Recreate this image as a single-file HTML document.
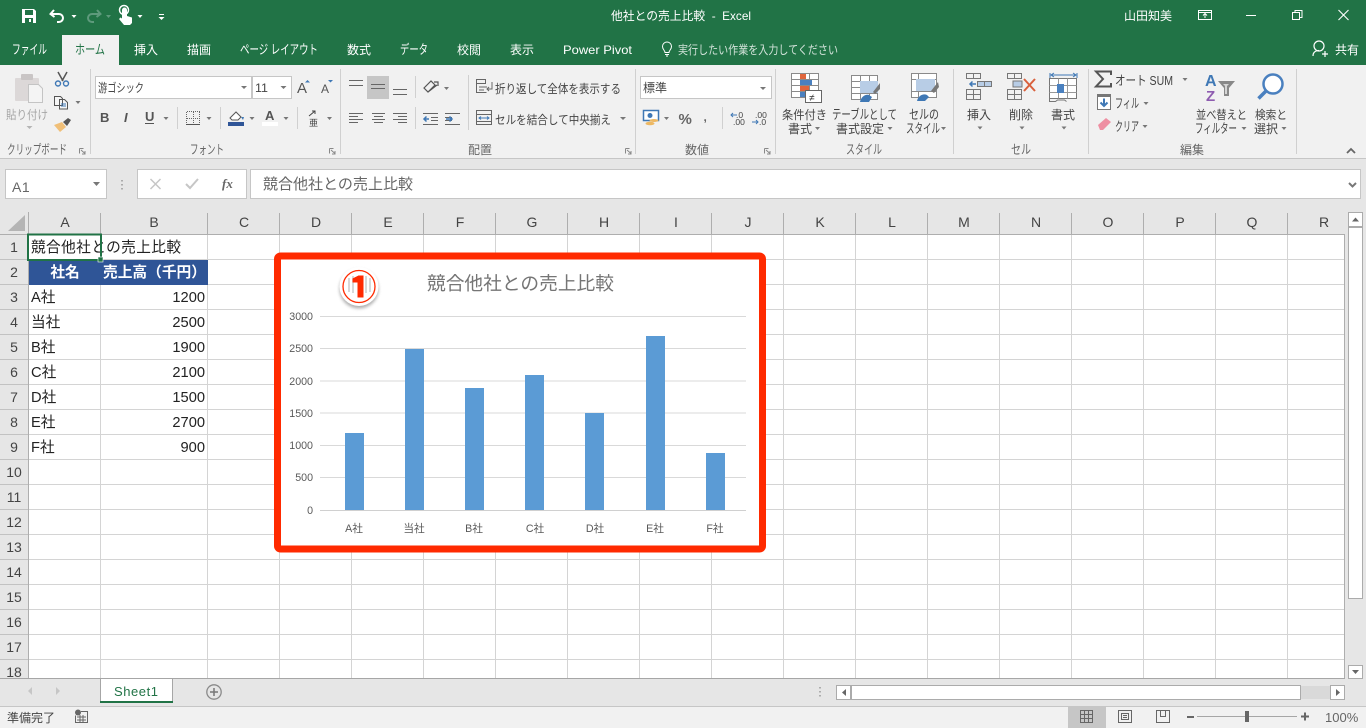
<!DOCTYPE html>
<html lang="ja"><head><meta charset="utf-8"><title>他社との売上比較 - Excel</title>
<style>
html,body{margin:0;padding:0;background:#e6e6e6;overflow:hidden}
svg{display:block}
text{font-family:"Liberation Sans","Noto Sans CJK JP",sans-serif;font-size:12px;fill:#444}
.w{fill:#fff}.g{fill:#8a8a8a}.c{font-size:14.67px;fill:#222}.h{font-size:14px;fill:#444;text-anchor:middle}
.gr{fill:#666}.ax{font-size:10.67px;fill:#595959}.ar{fill:#777}
text.k{font-size:13px}
</style></head><body>
<svg width="1366" height="728" viewBox="0 0 1366 728" xmlns="http://www.w3.org/2000/svg">
<defs><filter id="bl" x="-30%" y="-30%" width="160%" height="160%"><feGaussianBlur stdDeviation="1.5"/></filter></defs>
<rect width="1366" height="728" fill="#e6e6e6"/>
<!-- title bar -->
<rect width="1366" height="65" fill="#217346"/>
<rect x="62" y="35" width="57" height="30" fill="#f1f1f1"/>
<rect y="65" width="1366" height="93" fill="#f1f1f1"/>
<rect y="158" width="1366" height="1" fill="#c6c6c6"/>
<!-- QAT -->
<path d="M22 9h12l2 2v12H22z" fill="#fff"/><rect x="25" y="10" width="8" height="5" fill="#217346"/><rect x="25" y="18" width="8" height="5" fill="#217346"/><rect x="29" y="19" width="2" height="3" fill="#fff"/>
<path d="M54 10l-3.500 4 4 3M51.500 14H59a4 4 0 0 1 0 8h-2" fill="none" stroke="#fff" stroke-width="2"/>
<path d="M71.500 15h5l-2.500 3z" class="w"/>
<path d="M97 10l3.500 4-4 3M99.500 14H92a4 4 0 0 0 0 8h2" fill="none" stroke="#5e9a7c" stroke-width="2"/>
<path d="M106 15h5l-2.500 3z" fill="#5e9a7c"/>
<path d="M122 10a2.500 2.500 0 0 1 5 0v6l5 1.500V23l-2 2h-6l-5-6 1.500-1.500 1.500 1z" class="w"/><circle cx="124" cy="10" r="4.500" fill="none" stroke="#fff" stroke-width="1.500"/>
<path d="M137.500 15h5l-2.500 3z" class="w"/>
<rect x="159" y="14" width="5" height="1" fill="#fff"/><path d="M158.500 17h6l-3 3z" fill="#fff"/>
<text class="w" x="611" y="20" textLength="140" lengthAdjust="spacingAndGlyphs">他社との売上比較&#160; -&#160; Excel</text>
<text class="w" x="1124" y="20" textLength="48" lengthAdjust="spacingAndGlyphs">山田知美</text>
<path d="M1198.500 10.500h13v9h-13zM1198.500 12.500h13M1205 18v-4M1203 15.500l2-2 2 2" fill="none" stroke="#fff"/>
<rect x="1246" y="15" width="10" height="1" fill="#fff"/>
<path d="M1292.500 12.500h7v7h-7zM1295 12.500v-2h7v7h-2.500" fill="none" stroke="#fff"/>
<path d="M1338.500 10l10 10M1348.500 10l-10 10" fill="none" stroke="#fff" stroke-width="1.100"/>
<!-- tabs -->
<text class="w k" x="12" y="54" textLength="35" lengthAdjust="spacingAndGlyphs">ファイル</text>
<text class="k" x="75" y="54" textLength="30" lengthAdjust="spacingAndGlyphs" style="fill:#217346">ホーム</text>
<text class="w" x="134" y="54" textLength="24" lengthAdjust="spacingAndGlyphs">挿入</text>
<text class="w" x="187" y="54" textLength="24" lengthAdjust="spacingAndGlyphs">描画</text>
<text class="w k" x="240" y="54" textLength="78" lengthAdjust="spacingAndGlyphs">ページ レイアウト</text>
<text class="w" x="347" y="54" textLength="24" lengthAdjust="spacingAndGlyphs">数式</text>
<text class="w k" x="400" y="54" textLength="28" lengthAdjust="spacingAndGlyphs">データ</text>
<text class="w" x="457" y="54" textLength="24" lengthAdjust="spacingAndGlyphs">校閲</text>
<text class="w" x="510" y="54" textLength="24" lengthAdjust="spacingAndGlyphs">表示</text>
<text class="w" x="563" y="54" textLength="69" lengthAdjust="spacingAndGlyphs">Power Pivot</text>
<path d="M665 52.500c0-2-2.500-3-2.500-6a4.500 4.500 0 0 1 9 0c0 3-2.500 4-2.500 6zM665 54.500h4M666 56h2" fill="none" stroke="#fff"/>
<text x="678" y="54" textLength="160" lengthAdjust="spacingAndGlyphs" style="fill:#d3e3da">実行したい作業を入力してください</text>
<circle cx="1319" cy="46" r="5" fill="none" stroke="#fff" stroke-width="1.200"/><path d="M1313 56c0-4 3-5.500 6-5.500M1322 54h6M1325 51v6" fill="none" stroke="#fff" stroke-width="1.200"/>
<text class="w" x="1335" y="54" textLength="24" lengthAdjust="spacingAndGlyphs">共有</text>
<!-- ribbon separators -->
<path d="M90.500 69v85M340.500 69v85M635.500 69v85M775.500 69v85M953.500 69v85M1088.500 69v85M1296.500 69v85" stroke="#d0d0d0" fill="none"/>
<path d="M177.500 107v22M220.500 107v22M297.500 107v22M415.500 76v22M415.500 107v22M468.500 75v55M722.500 107v22" stroke="#d0d0d0" fill="none"/>
<!-- clipboard -->
<rect x="15" y="78" width="24" height="23" rx="1" fill="#dcd8d8"/><rect x="21" y="74" width="12" height="6" rx="1" fill="#c9c5c5"/>
<path d="M28.500 84.500h10l4 4v14h-14z" fill="#f4f4f4" stroke="#c4c4c4"/>
<text x="6" y="119" textLength="42" lengthAdjust="spacingAndGlyphs" style="fill:#a6a6a6">貼り付け</text>
<path d="M26.500 126h6l-3 3z" fill="#b5b5b5"/>
<path d="M58 72l5 9M67 72l-5 9" stroke="#555" stroke-width="1.500" fill="none"/><circle cx="58" cy="83.500" r="2.500" fill="none" stroke="#3f78b5" stroke-width="1.400"/><circle cx="66" cy="83.500" r="2.500" fill="none" stroke="#3f78b5" stroke-width="1.400"/>
<path d="M54.500 96.500h6l2 2v7h-8zM59.500 99.500h5l3 3v6.500h-8z" fill="#f6f6f6" stroke="#555"/><path d="M61 104h5M61 106h5" stroke="#3f78b5"/>
<path d="M75.500 101h5l-2.500 3z" class="ar"/>
<path d="M54 125l8-3 4 5-6 5z" fill="#f0bf78"/><path d="M63 122l5-4 3 2-4 6z" fill="#555"/>
<!-- font group -->
<rect x="95.500" y="76.500" width="156" height="22" fill="#fff" stroke="#c6c6c6"/>
<rect x="252.500" y="76.500" width="39" height="22" fill="#fff" stroke="#c6c6c6"/>
<text x="98" y="92" textLength="46" lengthAdjust="spacingAndGlyphs">游ゴシック</text>
<text x="255" y="92" textLength="13" lengthAdjust="spacingAndGlyphs">11</text>
<path d="M241 86h6l-3 3zM280.500 86h6l-3 3z" class="ar"/>
<text x="297" y="93" style="font-size:15px;fill:#555">A</text><path d="M305 82.500l2.500-2.500 2.500 2.500z" fill="#3f78b5"/>
<text x="321" y="93" style="font-size:12px;fill:#555">A</text><path d="M328 80h5l-2.500 2.500z" fill="#3f78b5"/>
<text x="100" y="122" style="font-size:13px;font-weight:bold;fill:#555">B</text>
<text x="124" y="122" style="font-size:13px;font-style:italic;font-weight:bold;fill:#555">I</text>
<text x="145" y="121" style="font-size:13px;font-weight:bold;fill:#555">U</text><rect x="145" y="123" width="9" height="1" fill="#555"/>
<path d="M163.500 117h5l-2.500 3zM206.500 117h5l-2.500 3zM249.500 117h5l-2.500 3zM283.500 117h5l-2.500 3zM327 117h5l-2.500 3z" class="ar"/>
<path d="M187 111.500h13M187 118.500h13M186.500 112v13M193.500 112v13M199.500 112v13" fill="none" stroke="#666" stroke-dasharray="1 1"/><path d="M186 124.500h14" stroke="#555"/>
<path d="M230 118l6-6 5 5-3 3h-6z" fill="#fff" stroke="#555"/><path d="M241 117l3 0-1 3z" fill="#3f78b5"/><rect x="228" y="122" width="16" height="4" fill="#2f5597"/>
<text x="265" y="120" style="font-size:13px;font-weight:bold;fill:#555">A</text><rect x="262" y="122" width="16" height="4" fill="#fff"/>
<path d="M309 116l6-5M312 111h3v3" stroke="#444" fill="none"/><text x="309" y="126" style="font-size:9px;fill:#444">亜</text>
<text x="7" y="154" textLength="60" lengthAdjust="spacingAndGlyphs" class="gr k">クリップボード</text>
<text x="190" y="154" textLength="34" lengthAdjust="spacingAndGlyphs" class="gr k">フォント</text>
<text x="468" y="154" textLength="24" lengthAdjust="spacingAndGlyphs" class="gr">配置</text>
<text x="685" y="154" textLength="24" lengthAdjust="spacingAndGlyphs" class="gr">数値</text>
<text x="846" y="154" textLength="36" lengthAdjust="spacingAndGlyphs" class="gr k">スタイル</text>
<text x="1011" y="154" textLength="20" lengthAdjust="spacingAndGlyphs" class="gr k">セル</text>
<text x="1180" y="154" textLength="24" lengthAdjust="spacingAndGlyphs" class="gr">編集</text>
<path d="M79.500 148.500h4M79.500 148.500v5M81 150l4 3.500M85 151v3h-3M329.500 148.500h4M329.500 148.500v5M331 150l4 3.500M335 151v3h-3M625.500 148.500h4M625.500 148.500v5M627 150l4 3.500M631 151v3h-3M764.500 148.500h4M764.500 148.500v5M766 150l4 3.500M770 151v3h-3" fill="none" stroke="#888"/>
<!-- alignment -->
<rect x="367" y="76" width="22" height="23" fill="#c6c6c6"/>
<path d="M349 80.500h14M349 85.500h14M371 84.500h14M371 88.500h14M393 89.500h14M393 94.500h14" stroke="#666" fill="none"/>
<path d="M349 113.500h14M349 116.500h9M349 119.500h14M349 122.500h9M372 113.500h13M374 116.500h9M372 119.500h13M374 122.500h9M393 113.500h14M398 116.500h9M393 119.500h14M398 122.500h9" stroke="#666" fill="none"/>
<path d="M424 88l7-7 4 4-7 7zM428 92l9-7M434 82h4v4" fill="none" stroke="#555" stroke-width="1.200"/>
<path d="M444 87h5l-2.500 3z" class="ar"/>
<path d="M423 113.500h15M431 117.500h7M431 120.500h7M423 124.500h15M445 113.500h15M445 117.500h7M445 120.500h7M445 124.500h15" stroke="#666" fill="none"/>
<path d="M429 119h-5m2.500-2.500l-2.500 2.500 2.500 2.500M446 119h6m-2.500-2.500l2.500 2.500-2.500 2.500" stroke="#3f78b5" stroke-width="1.500" fill="none"/>
<path d="M476.500 79.500h9v4h-9zM476.500 83.500v9h10M479 87h8M479 90h5M492 82v7h-5m2-2l-2 2 2 2" fill="none" stroke="#666"/>
<text x="495" y="93" textLength="126" lengthAdjust="spacingAndGlyphs">折り返して全体を表示する</text>
<rect x="476.500" y="110.500" width="15" height="14" fill="none" stroke="#666"/><path d="M476.500 114.500h15M476.500 121.500h15" stroke="#666"/><path d="M479 118h10M481 116.500l-2 1.500 2 1.500M487 116.500l2 1.500-2 1.500" fill="none" stroke="#3f78b5"/>
<text x="495" y="124" textLength="116" lengthAdjust="spacingAndGlyphs">セルを結合して中央揃え</text>
<path d="M620 117h6l-3 3z" class="ar"/>
<!-- number -->
<rect x="640.500" y="76.500" width="131" height="22" fill="#fff" stroke="#c6c6c6"/>
<text x="643" y="92" textLength="24" lengthAdjust="spacingAndGlyphs">標準</text>
<path d="M760 87h6l-3 3z" class="ar"/>
<rect x="643.500" y="110.500" width="15" height="10" fill="#fff" stroke="#3f78b5" stroke-width="1.500"/><circle cx="650" cy="115.500" r="2.500" fill="#3f78b5"/><ellipse cx="654" cy="120.500" rx="4.500" ry="1.500" fill="#edb863"/><ellipse cx="650" cy="123.500" rx="4.500" ry="1.800" fill="#edb863"/>
<path d="M664 117h5l-2.500 3z" class="ar"/>
<text x="678.500" y="124" style="font-size:15px;font-weight:bold;fill:#666">%</text>
<text x="703.500" y="121" style="font-size:12px;font-weight:bold;fill:#666">,</text>
<text x="736" y="118" style="font-size:8.500px;fill:#444">.0</text><text x="733" y="125" style="font-size:8.500px;fill:#444">.00</text>
<path d="M737 115h-6m2-2l-2 2 2 2" stroke="#3f78b5" fill="none"/>
<text x="755" y="118" style="font-size:8.500px;fill:#444">.00</text><text x="759" y="125" style="font-size:8.500px;fill:#444">.0</text>
<path d="M752 122h6m-2-2l2 2-2 2" stroke="#3f78b5" fill="none"/>
<!-- styles -->
<g fill="none" stroke="#8a8a8a">
<rect x="791.500" y="73.500" width="27" height="24" fill="#fff"/><path d="M791.500 79.500h27M791.500 85.500h27M791.500 91.500h27M800.500 73.500v24M809.500 73.500v24"/>
</g>
<rect x="800" y="74" width="6" height="5" fill="#e0653c"/><rect x="800" y="80" width="12" height="5" fill="#4a80bf"/><rect x="800" y="86" width="9" height="5" fill="#e0653c"/><rect x="800" y="92" width="5" height="5" fill="#4a80bf"/>
<rect x="805.500" y="90.500" width="16" height="12" fill="#fff" stroke="#666"/><text x="809" y="101" style="font-size:10px;fill:#333">≠</text>
<text x="782" y="119" textLength="45" lengthAdjust="spacingAndGlyphs">条件付き</text>
<text x="788" y="133" textLength="24" lengthAdjust="spacingAndGlyphs">書式</text><path d="M815 127h5l-2.500 3z" class="ar"/>
<g fill="none" stroke="#8a8a8a"><rect x="851.500" y="75.500" width="26" height="24" fill="#fff"/><path d="M851.500 81.500h26M851.500 87.500h26M851.500 93.500h26M860.500 75.500v24M869.500 75.500v24"/></g>
<rect x="860" y="81" width="18" height="12" fill="#b8cde6"/>
<path d="M873 92l7-9 0 6-5 5z" fill="#777"/><path d="M860 102c1-5 5-8 9-7l3 2-3 5z" fill="#3f78b5"/>
<text class="k" x="832" y="119" textLength="65" lengthAdjust="spacingAndGlyphs">テーブルとして</text>
<text x="836" y="133" textLength="48" lengthAdjust="spacingAndGlyphs">書式設定</text><path d="M887.500 127h5l-2.500 3z" class="ar"/>
<g fill="none" stroke="#8a8a8a"><rect x="911.500" y="73.500" width="25" height="24" fill="#fff"/><path d="M911.500 79.500h25M911.500 91.500h25M918.500 73.500v24"/></g>
<rect x="916" y="79" width="19" height="12" fill="#b8cde6"/>
<path d="M931 91l7-9 1 5-5 6z" fill="#777"/><path d="M917 101c1-5 6-8 10-6l2 2-4 4z" fill="#3f78b5"/>
<text class="k" x="909" y="119" textLength="30" lengthAdjust="spacingAndGlyphs">セルの</text>
<text class="k" x="906" y="133" textLength="34" lengthAdjust="spacingAndGlyphs">スタイル</text><path d="M941 127h5l-2.500 3z" class="ar"/>
<!-- cells -->
<g fill="none" stroke="#777">
<path d="M966.500 73.500h14v5h-14zM973.500 73.500v5M966.500 89.500h14v10h-14zM966.500 94.500h14M973.500 89.500v10M977.500 81.500h14v5h-14zM984.500 81.500v5"/>
<path d="M1007.500 73.500h14v5h-14zM1014.500 73.500v5M1007.500 89.500h14v10h-14zM1007.500 94.500h14M1014.500 89.500v10"/>
</g>
<path d="M976 84h-6m2.500-2.500l-2.500 2.500 2.500 2.500" stroke="#3f78b5" stroke-width="1.500" fill="none"/>
<rect x="978" y="82" width="6" height="4" fill="#b8cde6"/><rect x="985" y="82" width="6" height="4" fill="#b8cde6"/>
<rect x="1013" y="81" width="9" height="6" fill="#b8cde6" stroke="#777"/>
<path d="M1024 79l11 12M1035 79l-11 12" stroke="#d9603c" stroke-width="2" fill="none"/>
<path d="M1050 73v5M1077 73v5" stroke="#3f78b5"/><path d="M1051 75h25M1054 73l-3 2 3 2M1073 73l3 2-3 2" stroke="#3f78b5" fill="none"/>
<rect x="1049.500" y="78.500" width="27" height="20" fill="#fff" stroke="#777"/><path d="M1049.500 85.500h27M1049.500 92.500h27M1058.500 78.500v20M1067.500 78.500v20" stroke="#999" fill="none"/><rect x="1057" y="84" width="7" height="9" fill="#4a80bf"/>
<path d="M1049.500 98.500v3h6l2-1.500h7l2 1.500" stroke="#777" fill="none"/>
<text x="967" y="119" textLength="24" lengthAdjust="spacingAndGlyphs">挿入</text>
<text x="1009" y="119" textLength="24" lengthAdjust="spacingAndGlyphs">削除</text>
<text x="1051" y="119" textLength="24" lengthAdjust="spacingAndGlyphs">書式</text>
<path d="M977.500 126.500h5l-2.500 3zM1019.500 126.500h5l-2.500 3zM1061.500 126.500h5l-2.500 3z" class="ar"/>
<!-- editing -->
<path d="M1111 75v-3.500h-15l7 7.500-7 7.500h15V83" fill="none" stroke="#555" stroke-width="2"/>
<text class="k" x="1115" y="85" textLength="58" lengthAdjust="spacingAndGlyphs">オート SUM</text><path d="M1182.500 78h5l-2.500 3z" class="ar"/>
<rect x="1097.500" y="94.500" width="13" height="15" fill="#fff" stroke="#777"/><rect x="1097" y="94" width="14" height="3" fill="#777"/>
<path d="M1104 98.500v7M1100.500 102.500l3.500 3.500 3.500-3.500" fill="none" stroke="#3f78b5" stroke-width="2"/>
<text class="k" x="1115" y="108" textLength="24" lengthAdjust="spacingAndGlyphs">フィル</text><path d="M1143.500 102h5l-2.500 3z" class="ar"/>
<path d="M1098 125l8-7 5 4-8 8h-3z" fill="#ee8fa2"/>
<text class="k" x="1115" y="131" textLength="24" lengthAdjust="spacingAndGlyphs">クリア</text><path d="M1142.500 125h5l-2.500 3z" class="ar"/>
<text x="1205" y="86" style="font-size:16px;font-weight:bold;fill:#3f78b5">A</text>
<text x="1206" y="101" style="font-size:15px;font-weight:bold;fill:#8e5cb0">Z</text>
<path d="M1218 81h17l-6 7v8h-5v-8z" fill="#888"/><path d="M1223 84h6l-2 2v8h-2v-8z" fill="#d5d5d5"/>
<text x="1196" y="119" textLength="51" lengthAdjust="spacingAndGlyphs">並べ替えと</text>
<text class="k" x="1195" y="133" textLength="42" lengthAdjust="spacingAndGlyphs">フィルター</text><path d="M1241.500 127h5l-2.500 3z" class="ar"/>
<circle cx="1273" cy="84" r="9.500" fill="#fff" stroke="#4a80bf" stroke-width="2.500"/><path d="M1266 91l-7.500 7.500" stroke="#4a80bf" stroke-width="3.500" fill="none"/>
<text x="1255" y="119" textLength="32" lengthAdjust="spacingAndGlyphs">検索と</text>
<text x="1254" y="133" textLength="24" lengthAdjust="spacingAndGlyphs">選択</text><path d="M1281.500 127h5l-2.500 3z" class="ar"/>
<path d="M1347 153l4-4 4 4" fill="none" stroke="#666" stroke-width="1.800"/>
<!-- formula bar -->
<rect x="5.500" y="169.500" width="101" height="29" fill="#fff" stroke="#c6c6c6"/>
<text x="12" y="192" style="font-size:14px;fill:#666;letter-spacing:.5px">A1</text>
<path d="M93 182h7l-3.500 4z" fill="#777"/>
<path d="M122 180v1.500M122 184v1.500M122 188v1.500" stroke="#999" stroke-width="1.500"/>
<rect x="137.500" y="169.500" width="109" height="29" fill="#fff" stroke="#c6c6c6"/>
<path d="M150.500 179l10 10M160.500 179l-10 10" stroke="#c6c6c6" stroke-width="1.500" fill="none"/>
<path d="M186 184l4 4 8-9" stroke="#c6c6c6" stroke-width="2" fill="none"/>
<text x="222" y="188" style="font-size:13px;font-family:'Liberation Serif',serif;font-style:italic;font-weight:bold;fill:#666">fx</text>
<rect x="250.500" y="169.500" width="1110" height="29" fill="#fff" stroke="#c6c6c6"/>
<text x="263" y="189" textLength="150" lengthAdjust="spacingAndGlyphs" style="font-size:14.67px;fill:#666">競合他社との売上比較</text>
<path d="M1349 183l3.500 3.500 3.500-3.500" fill="none" stroke="#777" stroke-width="2"/>
<!-- sheet -->
<rect x="29" y="235" width="1316" height="443" fill="#fff"/>
<path d="M29 259.500h1315M29 284.500h1315M29 309.500h1315M29 334.500h1315M29 359.500h1315M29 384.500h1315M29 409.500h1315M29 434.500h1315M29 459.500h1315M29 484.500h1315M29 509.500h1315M29 534.500h1315M29 559.500h1315M29 584.500h1315M29 609.500h1315M29 634.500h1315M29 659.500h1315" stroke="#d4d4d4" fill="none"/>
<path d="M100.500 235v443M207.500 235v443M279.500 235v443M351.500 235v443M423.500 235v443M495.500 235v443M567.500 235v443M639.500 235v443M711.500 235v443M783.500 235v443M855.500 235v443M927.500 235v443M999.500 235v443M1071.500 235v443M1143.500 235v443M1215.500 235v443M1287.500 235v443" stroke="#d4d4d4" fill="none"/>
<path d="M28.500 212v466M0 234.500h1345M1344.500 234v444M100.500 213v21M207.500 213v21M279.500 213v21M351.500 213v21M423.500 213v21M495.500 213v21M567.500 213v21M639.500 213v21M711.500 213v21M783.500 213v21M855.500 213v21M927.500 213v21M999.500 213v21M1071.500 213v21M1143.500 213v21M1215.500 213v21M1287.500 213v21" stroke="#aeaeae" fill="none"/>
<path d="M0 259.500h28M0 284.500h28M0 309.500h28M0 334.500h28M0 359.500h28M0 384.500h28M0 409.500h28M0 434.500h28M0 459.500h28M0 484.500h28M0 509.500h28M0 534.500h28M0 559.500h28M0 584.500h28M0 609.500h28M0 634.500h28M0 659.500h28" stroke="#c2c2c2" fill="none"/>
<path d="M8 231l17-16v16z" fill="#b4b4b4"/>
<g>
<text class="h" x="65" y="227">A</text><text class="h" x="154" y="227">B</text><text class="h" x="244" y="227">C</text><text class="h" x="316" y="227">D</text><text class="h" x="388" y="227">E</text><text class="h" x="460" y="227">F</text><text class="h" x="532" y="227">G</text><text class="h" x="604" y="227">H</text><text class="h" x="676" y="227">I</text><text class="h" x="748" y="227">J</text><text class="h" x="820" y="227">K</text><text class="h" x="892" y="227">L</text><text class="h" x="964" y="227">M</text><text class="h" x="1036" y="227">N</text><text class="h" x="1108" y="227">O</text><text class="h" x="1180" y="227">P</text><text class="h" x="1252" y="227">Q</text><text class="h" x="1324" y="227">R</text>
</g>
<g>
<text class="h" x="14" y="252">1</text><text class="h" x="14" y="277">2</text><text class="h" x="14" y="302">3</text><text class="h" x="14" y="327">4</text><text class="h" x="14" y="352">5</text><text class="h" x="14" y="377">6</text><text class="h" x="14" y="402">7</text><text class="h" x="14" y="427">8</text><text class="h" x="14" y="452">9</text><text class="h" x="14" y="477">10</text><text class="h" x="14" y="502">11</text><text class="h" x="14" y="527">12</text><text class="h" x="14" y="552">13</text><text class="h" x="14" y="577">14</text><text class="h" x="14" y="602">15</text><text class="h" x="14" y="627">16</text><text class="h" x="14" y="652">17</text><text class="h" x="14" y="677">18</text>
</g>
<rect x="29" y="260" width="179" height="25" fill="#2f5597"/>
<rect x="101" y="236" width="106" height="23" fill="#fff"/>
<text class="c" x="31" y="252" textLength="150" lengthAdjust="spacing">競合他社との売上比較</text>
<rect x="28" y="234.500" width="73" height="25.500" fill="none" stroke="#217346" stroke-width="2"/>
<rect x="98" y="257" width="5" height="5" fill="#217346" stroke="#fff" stroke-width=".6"/>
<text x="65" y="277" text-anchor="middle" style="font-size:14.67px;font-weight:bold;fill:#fff">社名</text>
<text x="154.500" y="277" text-anchor="middle" textLength="103" lengthAdjust="spacingAndGlyphs" style="font-size:14.67px;font-weight:bold;fill:#fff">売上高（千円）</text>
<text class="c" x="31" y="302">A社</text><text class="c" x="205" y="302" text-anchor="end">1200</text>
<text class="c" x="31" y="327">当社</text><text class="c" x="205" y="327" text-anchor="end">2500</text>
<text class="c" x="31" y="352">B社</text><text class="c" x="205" y="352" text-anchor="end">1900</text>
<text class="c" x="31" y="377">C社</text><text class="c" x="205" y="377" text-anchor="end">2100</text>
<text class="c" x="31" y="402">D社</text><text class="c" x="205" y="402" text-anchor="end">1500</text>
<text class="c" x="31" y="427">E社</text><text class="c" x="205" y="427" text-anchor="end">2700</text>
<text class="c" x="31" y="452">F社</text><text class="c" x="205" y="452" text-anchor="end">900</text>
<!-- chart -->
<rect x="277.500" y="256" width="485" height="293" rx="3" fill="#fff" stroke="#ff2a00" stroke-width="7"/>
<text x="427" y="290" textLength="187" lengthAdjust="spacingAndGlyphs" style="font-size:18.67px;fill:#757575">競合他社との売上比較</text>
<path d="M320 316.500h426M320 348.500h426M320 381h426M320 413h426M320 445.500h426M320 477.500h426" stroke="#d9d9d9" fill="none"/>
<path d="M320 510.500h426" stroke="#d0d0d0" fill="none"/>
<g fill="#5b9bd5"><rect x="345" y="433" width="19" height="77"/><rect x="405" y="349" width="19" height="161"/><rect x="465" y="388" width="19" height="122"/><rect x="525" y="375" width="19" height="135"/><rect x="585" y="413" width="19" height="97"/><rect x="646" y="336" width="19" height="174"/><rect x="706" y="453" width="19" height="57"/></g>
<g text-anchor="end"><text class="ax" x="313" y="320">3000</text><text class="ax" x="313" y="352">2500</text><text class="ax" x="313" y="385">2000</text><text class="ax" x="313" y="417">1500</text><text class="ax" x="313" y="449">1000</text><text class="ax" x="313" y="481">500</text><text class="ax" x="313" y="514">0</text></g>
<g text-anchor="middle"><text class="ax" x="354" y="532">A社</text><text class="ax" x="414" y="532">当社</text><text class="ax" x="474" y="532">B社</text><text class="ax" x="535" y="532">C社</text><text class="ax" x="595" y="532">D社</text><text class="ax" x="655" y="532">E社</text><text class="ax" x="715" y="532">F社</text></g>
<circle cx="359" cy="289" r="19.500" fill="#777" filter="url(#bl)" opacity=".6"/>
<circle cx="359" cy="286.500" r="19.500" fill="#fff"/>
<circle cx="359" cy="286.500" r="16" fill="#fff" stroke="#ff2a00" stroke-width="1.300"/>
<path d="M349 278v14M353 276v17M366 276v17M370 278v14" stroke="#ccc" stroke-width="1.500" fill="none"/>
<path d="M352.500 278.500l6-3h5v22h-6v-15h-5z" fill="#ff2a00"/>
<!-- sheet tabs -->
<rect x="0" y="678" width="1366" height="28" fill="#e6e6e6"/>
<path d="M0 678.500h1345" stroke="#a6a6a6"/>
<path d="M100.500 678v25M172.500 678v25" stroke="#a6a6a6"/>
<rect x="101" y="679" width="71" height="22" fill="#fff"/>
<rect x="100" y="701" width="73" height="2" fill="#217346"/>
<text x="114" y="696" textLength="44" lengthAdjust="spacing" style="font-size:13px;fill:#217346">Sheet1</text>
<path d="M32 687v8l-4-4zM56 687v8l4-4z" fill="#c6c6c6"/>
<circle cx="214" cy="692" r="7.200" fill="none" stroke="#8a8a8a" stroke-width="1.300"/><path d="M210 692h8M214 688v8" stroke="#777" stroke-width="1.500"/>
<path d="M820 687v1.500M820 691v1.500M820 695v1.500" stroke="#999" stroke-width="1.500"/>
<rect x="836.500" y="685.500" width="14" height="14" fill="#fff" stroke="#ababab"/><path d="M846 689v7l-4-3.500z" fill="#666"/>
<rect x="851.500" y="685.500" width="449" height="14" fill="#fff" stroke="#ababab"/>
<rect x="1301" y="686" width="30" height="13" fill="#d9d9d9"/>
<rect x="1330.500" y="685.500" width="14" height="14" fill="#fff" stroke="#ababab"/><path d="M1336 689v7l4-3.500z" fill="#666"/>
<!-- v scroll -->
<rect x="1348.500" y="212.500" width="14" height="14" fill="#fff" stroke="#ababab"/><path d="M1352 221.500h7l-3.500-4z" fill="#666"/>
<rect x="1348.500" y="227.500" width="14" height="371" fill="#fff" stroke="#ababab"/>
<rect x="1348.500" y="665.500" width="14" height="13" fill="#fff" stroke="#ababab"/><path d="M1352 670h7l-3.500 4z" fill="#666"/>
<!-- status -->
<rect y="706" width="1366" height="22" fill="#f1f1f1"/><path d="M0 706.500h1366" stroke="#c6c6c6"/>
<text x="7" y="722" textLength="48" lengthAdjust="spacingAndGlyphs">準備完了</text>
<circle cx="78" cy="712.500" r="3" fill="#666"/><path d="M81 711.500h6.500v11h-12v-7M77 717h9M77 720h9M80 715v7M83 715v7" stroke="#666" fill="none"/>
<rect x="1068" y="707" width="38" height="21" fill="#c6c6c6"/>
<path d="M1080.500 710.500h12v12h-12zM1080.500 714.500h12M1080.500 718.500h12M1084.500 710.500v12M1088.500 710.500v12" fill="none" stroke="#666"/>
<path d="M1118.500 710.500h13v12h-13z M1121.500 713.500h7v6h-7zM1123 715.500h4M1123 717.500h4" fill="none" stroke="#666"/>
<path d="M1156.500 710.500h13v12h-13zM1160.500 710.500v6h5v-6" fill="none" stroke="#666"/>
<rect x="1187" y="716" width="7" height="2" fill="#666"/>
<rect x="1197" y="716" width="100" height="1" fill="#a6a6a6"/>
<rect x="1245" y="711" width="4" height="11" fill="#666"/>
<path d="M1301 716.500h8M1305 712.500v8" stroke="#666" stroke-width="2" fill="none"/>
<text x="1325" y="722" style="font-size:13px;fill:#666">100%</text>
</svg>
</body></html>
